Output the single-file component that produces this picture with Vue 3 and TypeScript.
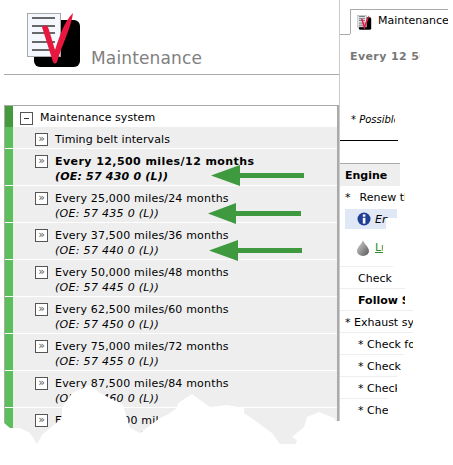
<script setup lang="ts">
const intervals = [
  { miles: '12,500', months: 12, oe: '57 430 0', bold: true },
  { miles: '25,000', months: 24, oe: '57 435 0' },
  { miles: '37,500', months: 36, oe: '57 440 0' },
  { miles: '50,000', months: 48, oe: '57 445 0' },
  { miles: '62,500', months: 60, oe: '57 450 0' },
  { miles: '75,000', months: 72, oe: '57 455 0' },
  { miles: '87,500', months: 84, oe: '57 460 0' },
  { miles: '100,000', months: 96, oe: '57 465 0' },
]

const checks = [
  { text: '* Exhaust system', width: 73, indent: 5 },
  { text: '* Check for leaks', width: 73, indent: 18 },
  { text: '* Check hoses', width: 64, indent: 18 },
  { text: '* Check belts', width: 57, indent: 18 },
  { text: '* Check fluid', width: 48, indent: 18 },
]

const arrows = [
  'M211 175.5 L240 165 V173 H304 V178 H240 V186 Z',
  'M208 213.5 L236 203 V211 H301 V216 H236 V224 Z',
  'M209 250.5 L238 240 V248 H302 V253 H238 V261 Z',
]

const tear =
  'M0 420 L4 423 L10 428 L20 428 L30 433 L37 444 L42 435 L50 428 L62 418 L62 408 L72 393 L90 385 L100 393 L123 405 L130 428 L140 433 L160 418 L167 415 L177 408 L178 403 L192 394 L203 402 L210 407 L227 405 L244 408 L244 413 L257 422 L272 433 L282 447 L286 458 L295 447 L297 440 L292 437 L304 427 L307 417 L319 412 L334 418 L336 421 L453 421 V465 H0 Z'
</script>

<template>
  <div class="page">
    <div class="left">
      <header class="head">
        <svg class="logo" width="56" height="58" viewBox="0 0 56 58">
          <rect x="7" y="9" width="46" height="47" rx="6" fill="#000" />
          <rect x="0.5" y="2.5" width="33" height="43" fill="#f4f7fb" stroke="#a8a8a8" />
          <path d="M5 7h23M5 15h23M5 22h23M5 31h23M5 39h23" stroke="#3a3a3a" stroke-width="1.6" />
          <path d="M15 16 C19 13 21 15 22 19 L28 39 C33 24 37 11 46 2 C45 14 35 34 30 51 Q28 54 26 51 Z" fill="#e8173f" />
        </svg>
        <h1 class="title">Maintenance</h1>
      </header>

      <div class="tree">
        <div class="tree-root">
          <span class="strip dark"></span>
          <span class="box minus"></span>
          <span class="root-label">Maintenance system</span>
        </div>
        <div class="tree-item single">
          <span class="strip"></span>
          <span class="box">»</span>
          <span class="label">Timing belt intervals</span>
        </div>
        <div v-for="item in intervals" :key="item.oe" class="tree-item" :class="{ bold: item.bold }">
          <span class="strip"></span>
          <span class="box">»</span>
          <div class="label">
            <div>Every {{ item.miles }} miles/{{ item.months }} months</div>
            <div class="oe">(OE: {{ item.oe }} (L))</div>
          </div>
        </div>
      </div>
    </div>

    <div class="right">
      <div class="tabs">
        <span class="tab-gap"></span>
        <div class="tab">
          <svg class="icon" width="15" height="17" viewBox="0 0 56 58">
            <rect x="7" y="9" width="46" height="47" rx="6" fill="#000" />
            <rect x="2.5" y="2.5" width="33" height="43" fill="#e8ecf2" stroke="#a8a8a8" stroke-width="2" />
            <path d="M7 7h23M7 15h23M7 22h23M7 31h23M7 39h23" stroke="#555" stroke-width="3" />
            <path d="M15 16 C19 13 21 15 22 19 L28 39 C33 24 37 11 46 2 C45 14 35 34 30 51 Q28 54 26 51 Z" fill="#e8173f" />
          </svg>
          <span class="tab-text">Maintenance</span>
        </div>
      </div>

      <div class="sheet-title">Every 12 500 miles</div>
      <div class="possible">* Possible</div>
      <div class="rule"></div>

      <div class="engine">Engine</div>
      <div class="renew"><span>*</span><span>Renew the engine oil</span></div>
      <div class="note">
        <svg class="icon" width="14" height="14" viewBox="0 0 14 14">
          <circle cx="7" cy="7" r="6.5" fill="#1f3f97" />
          <rect x="5.8" y="2.4" width="2.6" height="2.3" fill="#fff" />
          <rect x="5.8" y="5.8" width="2.6" height="5.8" fill="#fff" />
        </svg>
        <em class="note-text">Engine</em>
      </div>
      <div class="lube">
        <svg class="icon" width="12" height="16" viewBox="0 0 12 16">
          <defs>
            <linearGradient id="drop" x1="0" x2="1" y1="0" y2="1">
              <stop offset="0" stop-color="#d8d8d8" />
              <stop offset="1" stop-color="#555" />
            </linearGradient>
          </defs>
          <path d="M6 0 C7 4 12 7 12 11 A6 5 0 0 1 0 11 C0 7 5 4 6 0 Z" fill="url(#drop)" />
        </svg>
        <a>Lubricants</a>
      </div>
      <div class="line" style="width: 53px">Check</div>
      <div class="line follow" style="width: 65px">Follow Service</div>
      <div
        v-for="c in checks"
        :key="c.text"
        class="line"
        :style="{ width: c.width + 'px', paddingLeft: c.indent + 'px' }"
      >{{ c.text }}</div>
    </div>

    <svg class="arrows" width="453" height="465" viewBox="0 0 453 465">
      <path v-for="d in arrows" :key="d" :d="d" fill="#3f993f" />
      <path :d="tear" fill="#fff" />
    </svg>
  </div>
</template>

<style scoped>
.page {
  position: relative;
  display: flex;
  width: 453px;
  height: 465px;
  overflow: hidden;
  background: #fff;
  color: #000;
  font-family: "DejaVu Sans", Verdana, sans-serif;
  font-size: 11px;
}
.left {
  width: 335px;
  margin-left: 4px;
  flex: none;
}
.head {
  height: 74px;
  border-bottom: 1px solid #aaa;
  display: flex;
  align-items: flex-end;
}
.logo {
  margin: 0 0 5px 23px;
  flex: none;
}
.title {
  margin: 0 0 6px 8px;
  font-size: 17px;
  font-weight: normal;
  line-height: 20px;
  letter-spacing: 0.15px;
  color: #808080;
}
.tree {
  margin-top: 30px;
  border-top: 1px solid #aaa;
  border-right: 2px solid #aaa;
  border-left: 1px solid #aaa;
}
.tree-root {
  display: flex;
  height: 21px;
}
.strip {
  align-self: stretch;
  width: 8px;
  background: #5cbf5c;
  flex: none;
}
.strip.dark {
  background: #459a3c;
}
.box {
  width: 11px;
  height: 11px;
  border: 1px solid #555;
  background: #fff;
  color: #555;
  font-size: 11px;
  line-height: 9px;
  text-align: center;
  flex: none;
}
.minus {
  position: relative;
  margin: 6px 0 0 7px;
}
.minus::after {
  content: "";
  position: absolute;
  left: 3px;
  top: 5px;
  width: 5px;
  height: 1px;
  background: #333;
}
.root-label {
  margin: 4px 0 0 7px;
  line-height: 15px;
  letter-spacing: 0.06px;
}
.tree-item {
  display: flex;
  height: 36px;
  border-bottom: 1px solid #fff;
  background: #eee;
}
.tree-item.single {
  height: 21px;
}
.tree-item .box {
  margin: 6px 0 0 22px;
}
.label {
  margin: 5px 0 0 7px;
  line-height: 15px;
  white-space: nowrap;
  letter-spacing: 0.18px;
}
.single .label {
  letter-spacing: 0.1px;
}
.bold .label {
  font-weight: bold;
  letter-spacing: 0.43px;
}
.oe {
  font-style: italic;
  letter-spacing: 0.3px;
}
.bold .oe {
  letter-spacing: 0.2px;
}
.right {
  flex: 1;
  border-left: 1px solid #ccc;
  height: 421px;
  white-space: nowrap;
}
.icon {
  flex: none;
}
.tabs {
  display: flex;
  margin-top: 9px;
  height: 26px;
}
.tab-gap {
  width: 10px;
  border-bottom: 1px solid #aaa;
}
.tab {
  display: flex;
  align-items: center;
  gap: 6px;
  width: 98px;
  height: 25px;
  padding-left: 6px;
  overflow: hidden;
  box-sizing: border-box;
  border-top: 1px solid #aaa;
  border-left: 1px solid #aaa;
}
.tab-text {
  margin-bottom: 4px;
}
.sheet-title {
  margin: 14px 0 0 10px;
  width: 70px;
  overflow: hidden;
  font-weight: bold;
  color: #777;
  line-height: 15px;
  letter-spacing: 0.4px;
}
.possible {
  margin: 49px 0 0 11px;
  width: 44px;
  overflow: hidden;
  font-style: italic;
  font-size: 10px;
  line-height: 14px;
}
.rule {
  margin-top: 13px;
  width: 58px;
  height: 1px;
  background: #000;
}
.engine {
  margin-top: 22px;
  width: 60px;
  height: 23px;
  padding-left: 5px;
  box-sizing: border-box;
  border-top: 1px solid #aaa;
  background: #eee;
  font-weight: bold;
  line-height: 23px;
}
.renew {
  display: flex;
  gap: 9px;
  width: 65px;
  height: 23px;
  padding-left: 5px;
  overflow: hidden;
  box-sizing: border-box;
  line-height: 23px;
}
.note {
  display: flex;
  align-items: center;
  gap: 4px;
  width: 52px;
  height: 20px;
  margin-left: 5px;
  padding-left: 12px;
  overflow: hidden;
  box-sizing: border-box;
  background: #dfe8f4;
  clip-path: polygon(0 0, 100% 0, 100% 45%, 79% 45%, 79% 100%, 0 100%);
}
.note-text {
  width: 15px;
  overflow: hidden;
  flex: none;
}
.lube {
  display: flex;
  align-items: center;
  gap: 6px;
  width: 43px;
  height: 37px;
  padding-left: 17px;
  overflow: hidden;
  box-sizing: border-box;
}
.lube a {
  color: #2e8b2e;
  text-decoration: underline;
}
.line {
  height: 22px;
  padding-left: 18px;
  overflow: hidden;
  box-sizing: border-box;
  border-top: 1px solid #eee;
  line-height: 23px;
}
.follow {
  font-weight: bold;
}
.arrows {
  position: absolute;
  left: 0;
  top: 0;
  pointer-events: none;
}
</style>

<style>
html,
body {
  margin: 0;
  overflow: hidden;
}
</style>
